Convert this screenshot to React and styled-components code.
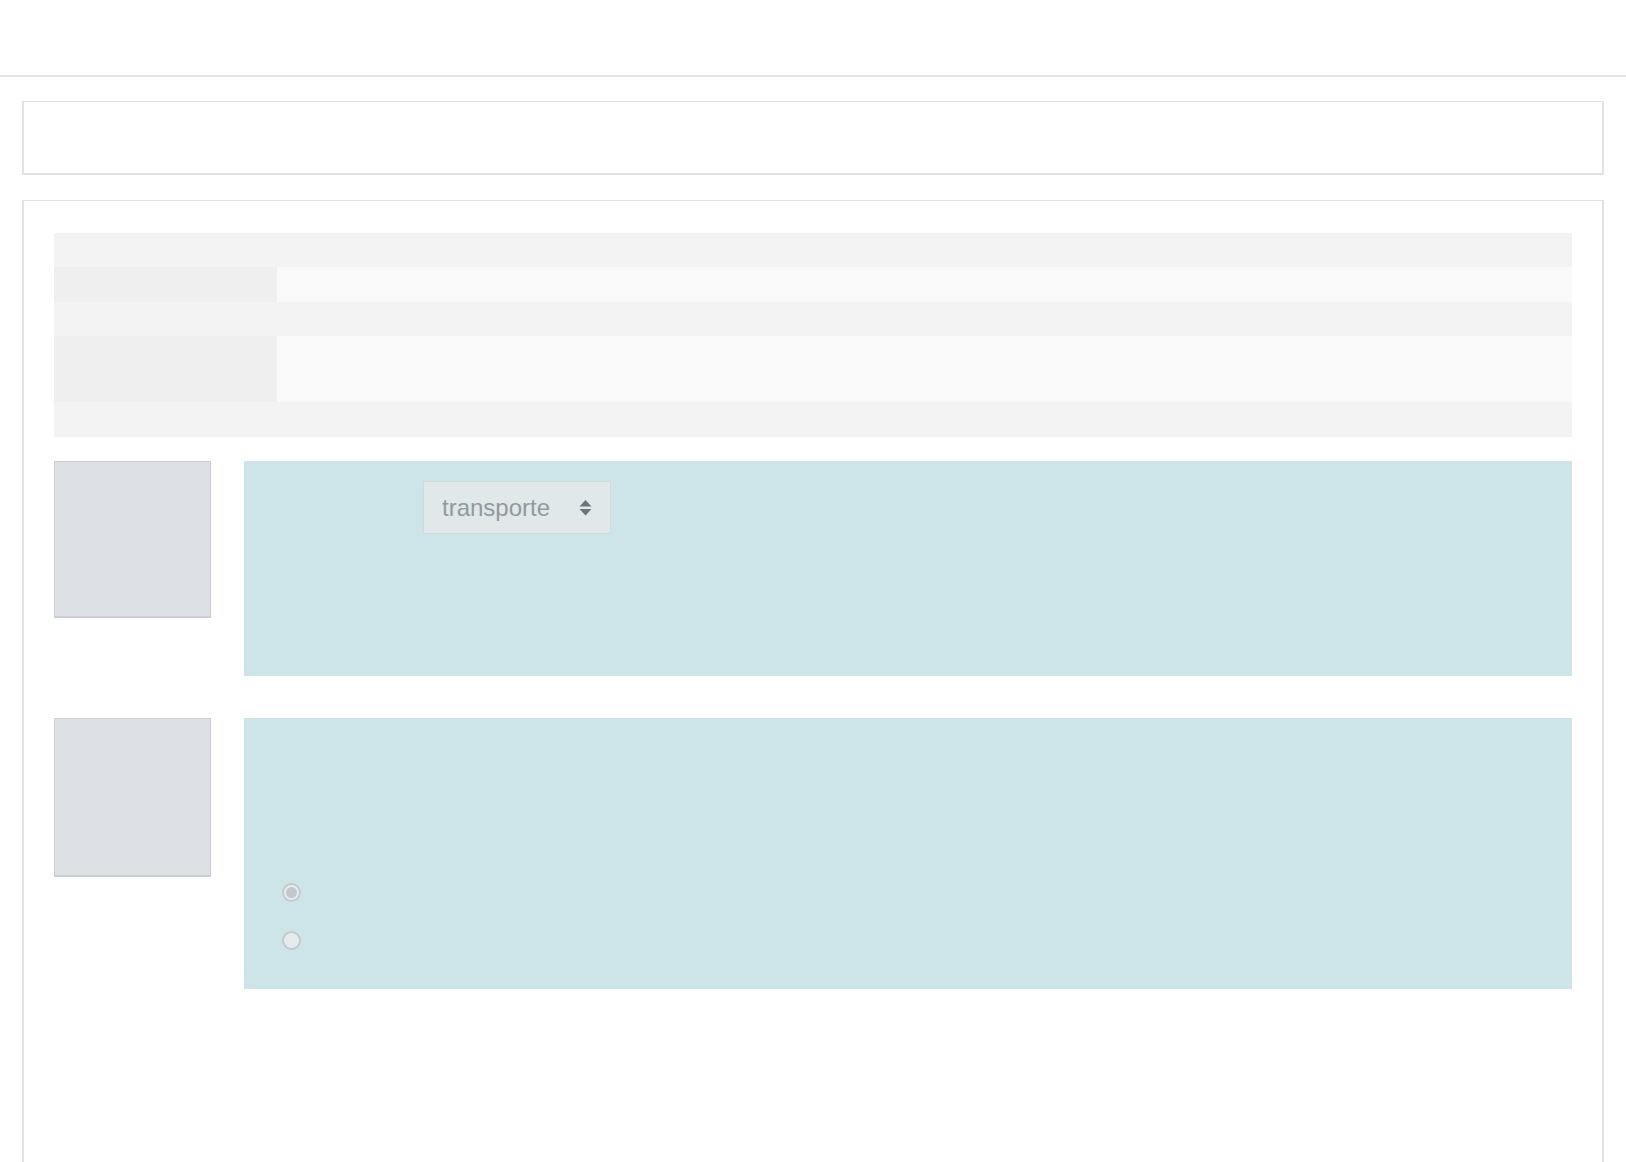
import styled, { createGlobalStyle } from 'styled-components';

const GlobalStyle = createGlobalStyle`
  html, body {
    margin: 0;
    padding: 0;
    background: #ffffff;
    font-family: "Liberation Sans", Arial, sans-serif;
  }
  * {
    box-sizing: border-box;
  }
`;

const TopBar = styled.header`
  height: 77px;
  border-bottom: 2px solid #e8e4e6;
`;

const Main = styled.main`
  padding: 24px 22px 0;
  display: flex;
  flex-direction: column;
  gap: 25px;
`;

const Panel = styled.section`
  border: 2px solid #e2e2e2;
  border-top-width: 1px;
  background: #ffffff;
  min-height: ${(p) => p.$minHeight || 'auto'};
  height: ${(p) => p.$height || 'auto'};
  padding: ${(p) => p.$padding || '0'};
`;

const Table = styled.div`
  display: flex;
  flex-direction: column;
`;

const Row = styled.div`
  display: grid;
  grid-template-columns: 223px 1fr;
  height: ${(p) => p.$height}px;
  background: #f3f3f3;
`;

const LabelCell = styled.div`
  background: #efefef;
`;

const ValueCell = styled.div`
  background: #f9f9f9;
`;

const Item = styled.div`
  display: flex;
  align-items: flex-start;
  gap: 33px;
  margin-top: ${(p) => p.$top}px;
`;

const Thumb = styled.div`
  flex: 0 0 157px;
  height: ${(p) => p.$size || 157}px;
  background: #dde0e5;
  border: 1px solid #c9cdd5;
  border-bottom-width: 2px;
`;

const Card = styled.div`
  flex: 1;
  background: #cde5e9;
  height: ${(p) => p.$height}px;
  padding: ${(p) => p.$padding};
`;

const SelectBox = styled.div`
  width: 188px;
  height: 53px;
  background: #e0e8ea;
  border: 1px solid #cfdadd;
  display: flex;
  align-items: center;
  justify-content: space-between;
  padding: 0 18px 0 18px;
  color: #909a9f;
  font-size: 24px;
`;

const RadioList = styled.div`
  display: flex;
  flex-direction: column;
  gap: 29px;
`;

const Radio = styled.span`
  width: 19px;
  height: 19px;
  border-radius: 50%;
  border: 2px solid #c6c9cb;
  background: #e6ecee;
  display: flex;
  align-items: center;
  justify-content: center;

  &::after {
    content: '';
    width: 11px;
    height: 11px;
    border-radius: 50%;
    background: ${(p) => (p.$checked ? '#c3c7cb' : 'transparent')};
  }
`;

function SortArrows() {
  return (
    <svg width="13" height="16" viewBox="0 0 13 16">
      <path d="M6.5 0 L12.5 6.5 L0.5 6.5 Z" fill="#6c7479" />
      <path d="M0.5 9 L12.5 9 L6.5 15.5 Z" fill="#6c7479" />
    </svg>
  );
}

export default function App() {
  return (
    <>
      <GlobalStyle />
      <TopBar />
      <Main>
        <Panel $height="74px" />
        <Panel $minHeight="1000px" $padding="32px 30px 0">
          <Table>
            <Row $height={34} />
            <Row $height={35}>
              <LabelCell />
              <ValueCell />
            </Row>
            <Row $height={34} />
            <Row $height={66}>
              <LabelCell />
              <ValueCell />
            </Row>
            <Row $height={35} />
          </Table>

          <Item $top={24}>
            <Thumb />
            <Card $height={215} $padding="20px 0 0 179px">
              <SelectBox>
                <span>transporte</span>
                <SortArrows />
              </SelectBox>
            </Card>
          </Item>

          <Item $top={42}>
            <Thumb $size={159} />
            <Card $height={271} $padding="165px 0 0 38px">
              <RadioList>
                <Radio $checked />
                <Radio />
              </RadioList>
            </Card>
          </Item>
        </Panel>
      </Main>
    </>
  );
}
